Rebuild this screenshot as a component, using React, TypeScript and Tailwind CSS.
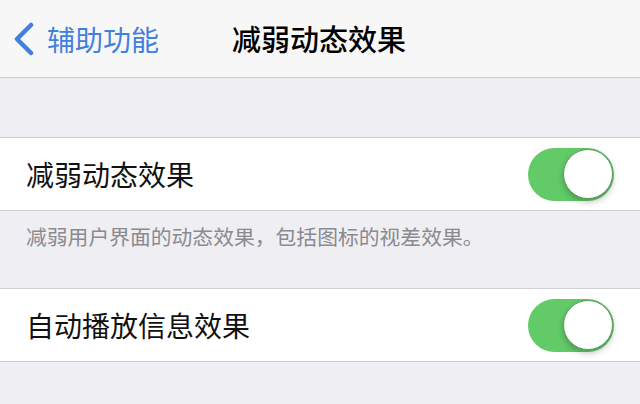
const cjk = { fontFamily: '"Noto Sans CJK SC", "Noto Sans", sans-serif' };

function BackChevron() {
  return (
    <svg width="24" height="34" viewBox="0 0 24 34" fill="none" className="shrink-0">
      <path d="M19 3 L5 17 L19 31" stroke="currentColor" strokeWidth="4.5" strokeLinecap="round" strokeLinejoin="round" />
    </svg>
  );
}

function Toggle() {
  return (
    <div className="relative h-[53px] w-[86px] rounded-full bg-[#62cb68]">
      <div className="absolute right-[1px] top-[1.5px] h-[50px] w-[50px] rounded-full border border-[#5a9a5c] bg-white shadow-[0_3px_6px_rgba(0,0,0,0.25)]" />
    </div>
  );
}

function Row({ label }: { label: string }) {
  return (
    <div className="flex h-[74px] items-center justify-between border-y border-[#cfcfd3] bg-white pl-[26px] pr-[26px]">
      <span className="text-[28px] text-[#111]">{label}</span>
      <Toggle />
    </div>
  );
}

export default function App() {
  return (
    <div className="h-[404px] w-[640px] overflow-hidden bg-[#efeff3]" style={cjk}>
      <header className="relative flex h-[78px] items-center border-b border-[#cdcdd1] bg-[#f7f7f8]">
        <div className="flex items-center pl-[12px] text-[#4280de]">
          <BackChevron />
          <span className="ml-[11px] text-[28px]">辅助功能</span>
        </div>
        <h1 className="absolute left-[232px] text-[29px] font-medium text-black">减弱动态效果</h1>
      </header>
      <div className="h-[59px]" />
      <Row label="减弱动态效果" />
      <p className="flex h-[77px] items-start pl-[26px] pt-[10px] text-[20.8px] text-[#8a8a8f]">
        减弱用户界面的动态效果，包括图标的视差效果。
      </p>
      <Row label="自动播放信息效果" />
    </div>
  );
}
